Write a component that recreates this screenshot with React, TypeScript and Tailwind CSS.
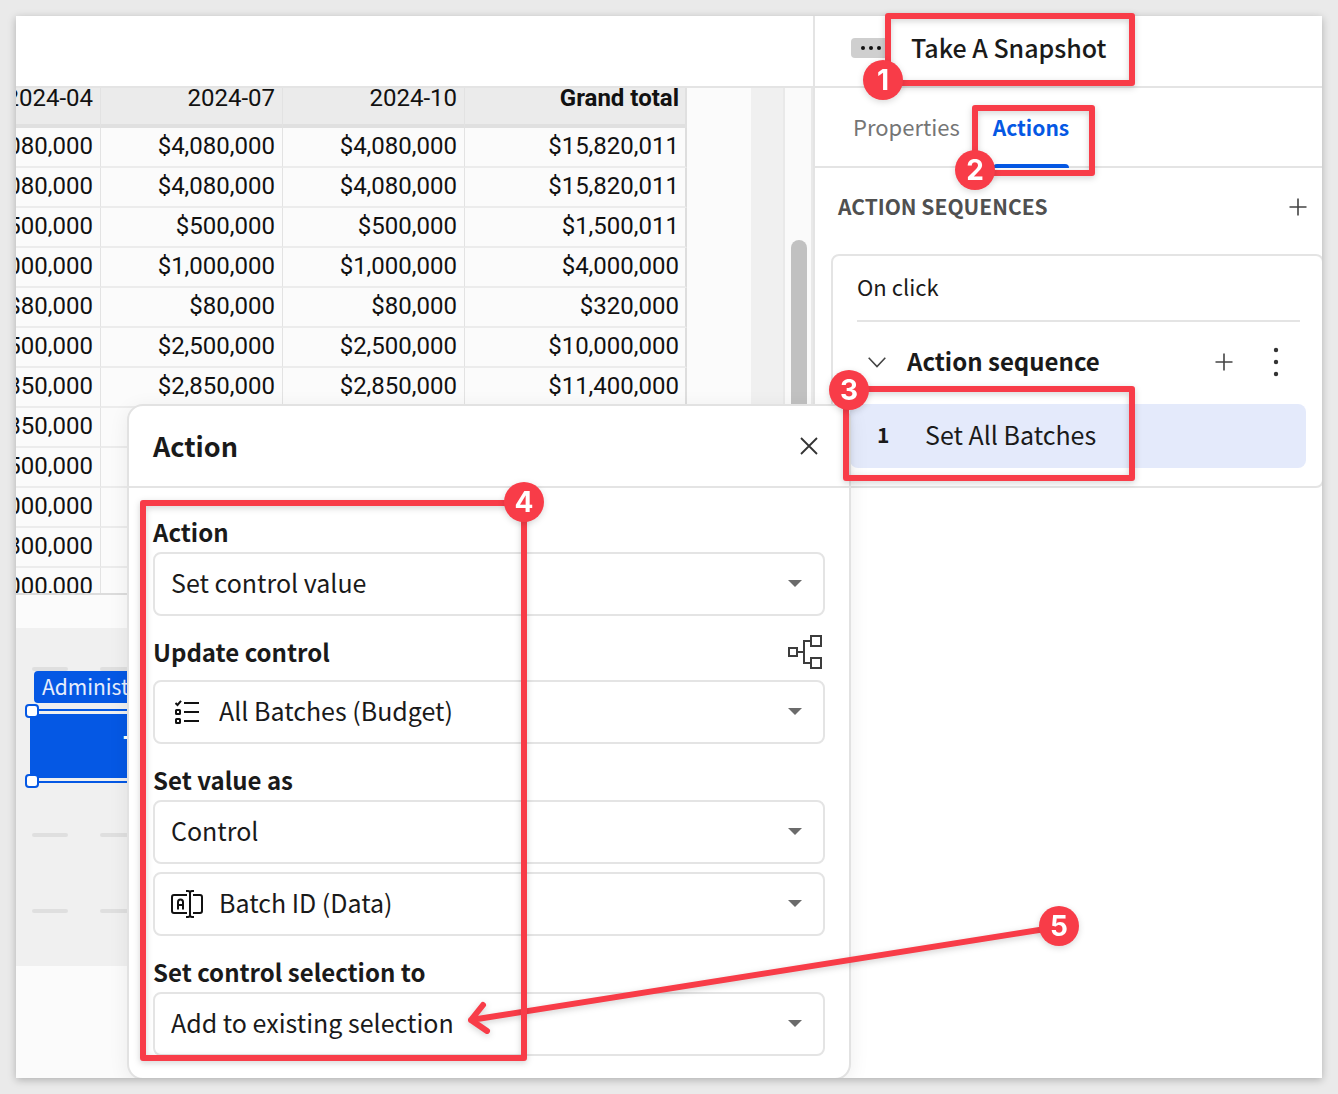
import { useId, type ReactNode } from "react";

type Row = { q2: string; q3: string; q4: string; total: string };

const rows: Row[] = [
  { q2: "$4,080,000", q3: "$4,080,000", q4: "$4,080,000", total: "$15,820,011" },
  { q2: "$4,080,000", q3: "$4,080,000", q4: "$4,080,000", total: "$15,820,011" },
  { q2: "$500,000", q3: "$500,000", q4: "$500,000", total: "$1,500,011" },
  { q2: "$1,000,000", q3: "$1,000,000", q4: "$1,000,000", total: "$4,000,000" },
  { q2: "$80,000", q3: "$80,000", q4: "$80,000", total: "$320,000" },
  { q2: "$2,500,000", q3: "$2,500,000", q4: "$2,500,000", total: "$10,000,000" },
  { q2: "$2,850,000", q3: "$2,850,000", q4: "$2,850,000", total: "$11,400,000" },
  { q2: "$2,850,000", q3: "", q4: "", total: "" },
  { q2: "$2,500,000", q3: "", q4: "", total: "" },
  { q2: "$1,000,000", q3: "", q4: "", total: "" },
  { q2: "$1,800,000", q3: "", q4: "", total: "" },
  { q2: "$1,000,000", q3: "", q4: "", total: "" },
];

function PivotTable() {
  const cell = "h-10 border-r border-b-2 border-r-[#e3e3e3] border-b-[#ececec] pr-[7px] pb-[2px] text-right";
  const head = "border-r border-[#e2e2e2] pr-[7px] text-right align-top leading-5 font-normal";
  return (
    <div className="flex h-[507px] justify-end overflow-hidden border-b-2 border-[#dcdcdc] pr-16">
      <table className="w-[768px] shrink-0 table-fixed border-separate border-spacing-0 self-start font-['Roboto',sans-serif] text-2xl leading-6 text-[#111]">
        <colgroup>
          <col className="w-[182px]" />
          <col className="w-[182px]" />
          <col className="w-[182px]" />
          <col className="w-[222px]" />
        </colgroup>
        <thead>
          <tr className="h-10 bg-[#ebebeb]">
            <th className={`${head} border-b-4 border-b-[#e0e0e0]`}>2024-04</th>
            <th className={`${head} border-b-4 border-b-[#e0e0e0]`}>2024-07</th>
            <th className={`${head} border-b-4 border-b-[#e0e0e0]`}>2024-10</th>
            <th className="border-r-2 border-b-4 border-[#e0e0e0] pr-[6px] text-right align-top leading-5 font-bold">
              Grand total
            </th>
          </tr>
        </thead>
        <tbody>
          {rows.map((r, i) => (
            <tr key={i}>
              <td className={cell}>{r.q2}</td>
              <td className={cell}>{r.q3}</td>
              <td className={cell}>{r.q4}</td>
              <td className="h-10 border-r-2 border-b-2 border-r-[#dedede] border-b-[#ececec] pr-[6px] pb-[2px] text-right">
                {r.total}
              </td>
            </tr>
          ))}
        </tbody>
      </table>
    </div>
  );
}

function Dashes() {
  return (
    <div className="flex h-1 gap-8 overflow-hidden pl-4">
      {Array.from({ length: 10 }, (_, i) => (
        <span key={i} className="h-1 w-9 shrink-0 rounded-full bg-[#dfdfdf]" />
      ))}
    </div>
  );
}

function Handle({ className }: { className: string }) {
  return <span className={`absolute size-[14px] rounded-[4px] border-2 border-[#0558e4] bg-white ${className}`} />;
}

function Canvas() {
  return (
    <div className="flex flex-1 overflow-hidden bg-[#fbfbfb]">
      <div className="flex min-w-0 flex-1 flex-col">
        <PivotTable />
        <div className="mt-[33px] h-[338px] bg-[#f0f0f0] pt-[39px]">
          <Dashes />
          <div className="ml-[18px] flex h-8 w-fit items-center rounded-[4px] bg-[#0558e4] px-2 pb-[2px] text-[21px] leading-8 text-white/90">
            Administration
          </div>
          <div className="relative mt-[6px] ml-4 border-y-2 border-l-2 border-[#0558e4] py-[3px]">
            <button className="-ml-1 block h-16 w-full bg-[#0558e4] pb-1 pl-[93px] text-left text-2xl font-bold text-white">
              Take A Snapshot
            </button>
            <Handle className="-top-[7px] -left-[9px]" />
            <Handle className="-bottom-[7px] -left-[9px]" />
          </div>
          <div className="mt-[50px] flex flex-col gap-[72px]">
            <Dashes />
            <Dashes />
          </div>
        </div>
      </div>
      <div className="w-8 bg-[#f0f0f0]" />
      <div className="w-[30px] border-x-2 border-[#e9e9e9] bg-[#fafafa] pr-[4px] pl-[6px] pt-[152px]">
        <div className="h-[480px] rounded-full bg-[#c1c1c1]" />
      </div>
    </div>
  );
}

function PlusIcon() {
  return (
    <svg width="18" height="18" viewBox="0 0 18 18" stroke="#444" strokeWidth="1.6" aria-hidden="true">
      <path d="M9 0.5V17.5M0.5 9H17.5" />
    </svg>
  );
}

function Sidebar() {
  return (
    <aside className="flex w-[509px] shrink-0 flex-col overflow-hidden border-l-2 border-[#e4e4e4] bg-white text-[#1a1a1a]">
      <header className="flex h-[72px] items-center border-b-2 border-[#e4e4e4] pb-[6px] pl-9">
        <button aria-label="More" className="flex h-5 w-10 items-center justify-center rounded-[4px] bg-[#cfcfcf]">
          <svg width="20" height="4" viewBox="0 0 20 4" fill="#111" aria-hidden="true">
            <circle cx="2" cy="2" r="2" />
            <circle cx="10" cy="2" r="2" />
            <circle cx="18" cy="2" r="2" />
          </svg>
        </button>
        <h1 className="ml-5 pb-[2px] text-[25px] leading-8 font-medium">Take A Snapshot</h1>
      </header>
      <nav className="flex h-20 border-b-2 border-[#e4e4e4] pl-[38px]">
        <button className="-mb-[2px] h-20 pb-1 text-[22px] text-[#757575]">Properties</button>
        <button className="relative -mb-[2px] ml-[33px] h-20 text-[21px] font-bold text-[#0558e4]">
          Actions
          <span className="absolute inset-x-0 bottom-0 h-1 rounded-t-[4px] bg-[#0558e4]" />
        </button>
      </nav>
      <div className="flex h-[78px] items-center justify-between pr-[15px] pl-[23px] text-[#505050]">
        <h2 className="pb-[2px] text-[21px] leading-8 font-bold">ACTION SEQUENCES</h2>
        <button aria-label="Add sequence">
          <PlusIcon />
        </button>
      </div>
      <section className="mt-2 -mr-[2px] ml-4 h-[234px] rounded-[8px] border-2 border-[#e4e4e4]">
        <div className="mr-[22px] ml-6 flex h-[66px] items-center border-b-2 border-[#e4e4e4] pb-1 text-[22px]">
          On click
        </div>
        <div className="flex h-[82px] items-center pb-[2px] pl-[35px]">
          <svg width="18" height="11" viewBox="0 0 18 11" fill="none" stroke="#444" strokeWidth="1.6" aria-hidden="true">
            <path d="M0.7 0.7L9 9.5L17.3 0.7" />
          </svg>
          <h3 className="ml-[21px] flex-1 pb-[2px] text-[24px] leading-8 font-bold">Action sequence</h3>
          <button aria-label="Add action">
            <PlusIcon />
          </button>
          <button aria-label="Sequence menu" className="mr-[43px] ml-10">
            <svg width="6" height="30" viewBox="0 0 6 30" fill="#333" aria-hidden="true">
              <circle cx="3" cy="3" r="2.2" />
              <circle cx="3" cy="15" r="2.2" />
              <circle cx="3" cy="27" r="2.2" />
            </svg>
          </button>
        </div>
        <button className="mr-4 ml-[17px] flex h-16 w-[456px] items-center rounded-[8px] bg-[#e4eafb] pb-[2px] pl-[27px] text-left">
          <span className="w-12 text-[21px] font-bold">1</span>
          <span className="text-[25px]">Set All Batches</span>
        </button>
      </section>
    </aside>
  );
}

function ChecklistIcon() {
  return (
    <svg width="24" height="24" viewBox="0 0 24 24" fill="none" stroke="#111" strokeWidth="2" aria-hidden="true">
      <path d="M9 3H24M9 12H24M9 21H24" />
      <path d="M0.5 3L2.5 5L6 0.8" />
      <rect x="1" y="10" width="4" height="4" rx="0.5" />
      <rect x="1" y="19" width="4" height="4" rx="0.5" />
    </svg>
  );
}

function TextInputIcon() {
  return (
    <svg width="32" height="28" viewBox="0 0 32 28" fill="none" stroke="#111" strokeWidth="2" aria-hidden="true">
      <path d="M16 5H3Q1 5 1 7V21Q1 23 3 23H16M22 5H29Q31 5 31 7V21Q31 23 29 23H22" />
      <path d="M7 19.5V12Q7 9.5 9.5 9.5Q12 9.5 12 12V19.5M7 15H12" />
      <path d="M15 1H17Q19 1 19 3V25Q19 27 17 27H15M23 1H21Q19 1 19 3M23 27H21Q19 27 19 25" />
    </svg>
  );
}

function HierarchyIcon() {
  return (
    <svg width="34" height="34" viewBox="0 0 34 34" fill="none" stroke="#3c3c3c" strokeWidth="2" aria-hidden="true">
      <rect x="1" y="13" width="8" height="8" />
      <rect x="23" y="1" width="10" height="10" />
      <rect x="23" y="23" width="10" height="10" />
      <path d="M10 17H16M22 6H16V28H22" />
    </svg>
  );
}

function Field({ id, label, value, icon }: { id: string; label?: string; value: string; icon?: ReactNode }) {
  return (
    <div className="relative">
      <select
        id={id}
        aria-label={label}
        className={
          icon
            ? "block h-16 w-full appearance-none rounded-[8px] border-2 border-[#e4e4e4] bg-white pr-12 pb-[2px] pl-16 text-[25px]"
            : "block h-16 w-full appearance-none rounded-[8px] border-2 border-[#e4e4e4] bg-white pr-12 pb-[2px] pl-4 text-[25px]"
        }
      >
        <option>{value}</option>
      </select>
      {icon && (
        <span className="pointer-events-none absolute inset-y-0 left-[18px] flex w-8 items-center justify-center">
          {icon}
        </span>
      )}
      <svg
        className="pointer-events-none absolute top-7 right-[23px]"
        width="14"
        height="7"
        viewBox="0 0 14 7"
        fill="#6b6b6b"
        aria-hidden="true"
      >
        <path d="M0 0H14L7 7Z" />
      </svg>
    </div>
  );
}

function ActionDialog() {
  const id = useId();
  const label = "block text-[24px] leading-10 font-bold";
  return (
    <div
      role="dialog"
      aria-labelledby={`${id}-title`}
      className="absolute top-[388px] right-[471px] w-[724px] rounded-[16px] border-2 border-[#e2e2e2] bg-white text-[#1a1a1a] shadow-[0_4px_20px_rgba(0,0,0,0.07)]"
    >
      <div className="flex h-[82px] items-center justify-between border-b-2 border-[#e4e4e4] pr-[31px] pl-6">
        <h2 id={`${id}-title`} className="text-[27px] leading-8 font-bold">
          Action
        </h2>
        <button aria-label="Close">
          <svg width="18" height="18" viewBox="0 0 18 18" stroke="#333" strokeWidth="1.8" aria-hidden="true">
            <path d="M1 1L17 17M17 1L1 17" />
          </svg>
        </button>
      </div>
      <div className="flex flex-col gap-4 px-6 pt-6 pb-[22px]">
        <div>
          <label htmlFor={`${id}-a`} className={label}>
            Action
          </label>
          <Field id={`${id}-a`} value="Set control value" />
        </div>
        <div>
          <div className="flex items-start justify-between pb-2">
            <label htmlFor={`${id}-b`} className={label}>
              Update control
            </label>
            <button aria-label="Show lineage" className="mt-[3px] mr-[3px]">
              <HierarchyIcon />
            </button>
          </div>
          <Field id={`${id}-b`} value="All Batches (Budget)" icon={<ChecklistIcon />} />
        </div>
        <div>
          <label htmlFor={`${id}-c`} className={label}>
            Set value as
          </label>
          <Field id={`${id}-c`} value="Control" />
          <div className="mt-2">
            <Field id={`${id}-d`} label="Source control" value="Batch ID (Data)" icon={<TextInputIcon />} />
          </div>
        </div>
        <div>
          <label htmlFor={`${id}-e`} className={label}>
            Set control selection to
          </label>
          <Field id={`${id}-e`} value="Add to existing selection" />
        </div>
      </div>
    </div>
  );
}

function Frame({ className }: { className: string }) {
  return (
    <div
      className={`absolute rounded-[3px] border-6 border-[#f83c48] drop-shadow-[0_2px_3px_rgba(0,0,0,0.18)] ${className}`}
    />
  );
}

function Badge({ n, className }: { n: number; className: string }) {
  return (
    <div
      className={`absolute flex size-10 items-center justify-center rounded-full bg-[#f83c48] font-['Inter',sans-serif] text-[28px] leading-none font-bold text-white drop-shadow-[0_2px_3px_rgba(0,0,0,0.15)] ${className}`}
    >
      {n}
    </div>
  );
}

function Annotations() {
  return (
    <div className="pointer-events-none absolute inset-0">
      <svg
        className="absolute top-[880px] right-[240px] drop-shadow-[0_2px_3px_rgba(0,0,0,0.18)]"
        width="622"
        height="150"
        viewBox="460 896 622 150"
        fill="none"
        stroke="#f83c48"
        strokeWidth="6"
        strokeLinecap="round"
        strokeLinejoin="round"
        aria-hidden="true"
      >
        <path d="M1058 927L471 1020M483 1005L471 1020L487 1031" />
      </svg>
      <Frame className="-top-[3px] right-[187px] h-[73px] w-[250px]" />
      <Frame className="top-[89px] right-[227px] h-[71px] w-[123px]" />
      <Frame className="top-[370px] right-[187px] h-[95px] w-[292px]" />
      <Frame className="top-[484px] right-[795px] h-[561px] w-[387px]" />
      <Badge n={1} className="top-11 right-[419px]" />
      <Badge n={2} className="top-[134px] right-[327px]" />
      <Badge n={3} className="top-[354px] right-[453px]" />
      <Badge n={4} className="top-[466px] right-[778px]" />
      <Badge n={5} className="top-[890px] right-[243px]" />
    </div>
  );
}

export default function App() {
  return (
    <div className="flex min-h-screen flex-col overflow-hidden bg-[#eaeaea] p-4 font-['Noto_Sans_CJK_SC',sans-serif]">
      <div className="relative flex flex-1 flex-col shadow-[0_2px_8px_rgba(0,0,0,0.25)]">
        <div className="relative flex min-h-[1062px] flex-1 overflow-hidden bg-white">
          <main className="flex min-w-0 flex-1 flex-col">
            <div className="h-[72px] border-b-2 border-[#e4e4e4]" />
            <Canvas />
          </main>
          <Sidebar />
          <ActionDialog />
        </div>
        <Annotations />
      </div>
    </div>
  );
}
